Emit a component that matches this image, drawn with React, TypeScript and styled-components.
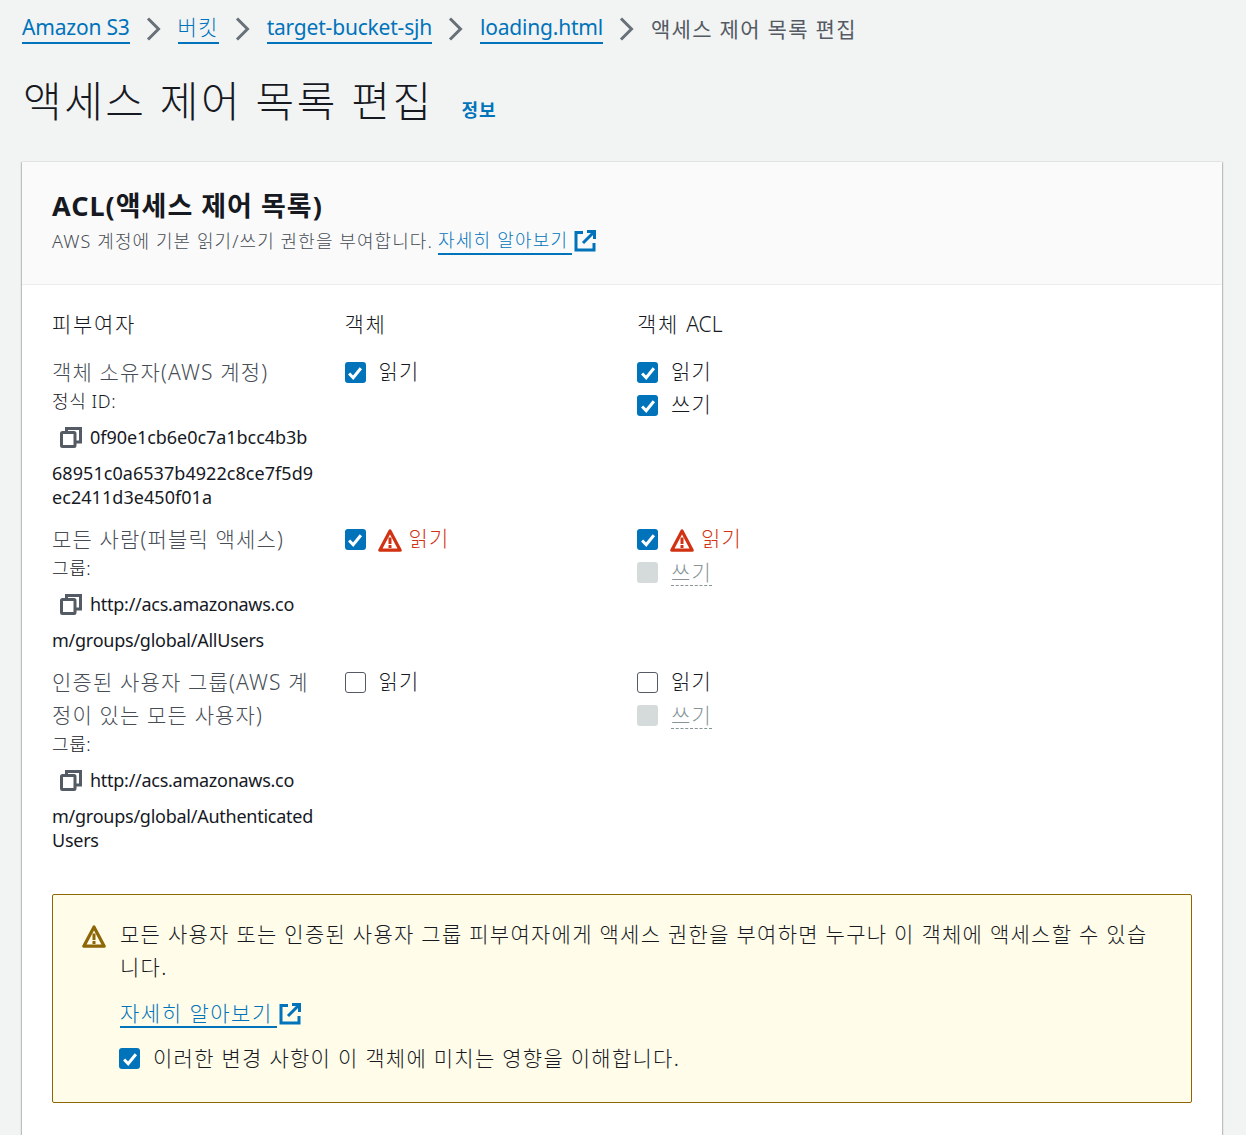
import React from "react";
import styled, { createGlobalStyle } from "styled-components";

const FONT = `"Noto Sans", "Noto Sans CJK KR", sans-serif`;

const Global = createGlobalStyle`
  html, body { margin: 0; padding: 0; background: #f2f3f3; }
  body { font-family: ${FONT}; color: #16191f; height: 1135px; overflow: hidden; }
  * { box-sizing: border-box; }
`;

const Page = styled.div`
  padding: 0 24px 0 22px;
  width: 1246px;
  height: 1135px;
  overflow: hidden;
`;
const Crumbs = styled.nav`
  display: flex;
  align-items: center;
  height: 30px;
  margin-top: 14px;
  font-size: 21px;
  line-height: 30px;
`;
const CrumbLink = styled.a<{ $ko?: boolean }>`
  color: #0073bb;
  border-bottom: 2px solid #0073bb;
  line-height: 27px;
  height: 30px;
  font-weight: ${(p) => (p.$ko ? 300 : 400)};
  letter-spacing: ${(p) => (p.$ko ? "1.2px" : "-0.2px")};
  white-space: nowrap;
`;
const CrumbCurrent = styled.span`
  color: #545b64;
  font-weight: 400;
  font-size: 21px;
  letter-spacing: 1.3px;
  white-space: nowrap;
`;
const Sep = styled.svg`
  width: 16px;
  height: 24px;
  margin: 0 16px;
  flex: none;
`;
const TitleRow = styled.div`
  display: flex;
  align-items: baseline;
  margin-top: 28px;
  height: 58px;
`;
const Title = styled.h1`
  margin: 0;
  font-size: 42px;
  line-height: 58px;
  font-weight: 300;
  letter-spacing: 2.5px;
  color: #16191f;
  padding-left: 1px;
`;
const Info = styled.a`
  color: #0073bb;
  font-size: 18px;
  font-weight: 700;
  letter-spacing: 1px;
  margin-left: 28px;
`;
const Card = styled.section`
  margin-top: 32px;
  background: #fff;
  box-shadow: 0 1px 2px rgba(0, 28, 36, 0.3), 1px 0 1px rgba(0, 28, 36, 0.15), -1px 0 1px rgba(0, 28, 36, 0.15);
  height: 1000px;
`;
const CardHead = styled.header`
  background: #fafafa;
  border-bottom: 1px solid #eaeded;
  height: 123px;
  padding: 27px 30px 0;
`;
const CardTitle = styled.h2`
  margin: 0;
  font-size: 27px;
  line-height: 34px;
  font-weight: 700;
  letter-spacing: 1px;
`;
const CardDesc = styled.p`
  margin: 2px 0 0;
  font-size: 18px;
  line-height: 32px;
  color: #474d55;
  font-weight: 300;
  letter-spacing: 1.08px;
  display: flex;
  align-items: center;
`;
const TextLink = styled.a<{ $large?: boolean }>`
  color: #0073bb;
  border-bottom: 2px solid #0073bb;
  padding-right: 4px;
  margin-left: ${(p) => (p.$large ? 0 : 5)}px;
  font-size: ${(p) => (p.$large ? 21 : 18)}px;
  letter-spacing: ${(p) => (p.$large ? 1.5 : 1.2)}px;
  line-height: 26px;
  font-weight: 300;
`;
const Body = styled.div`
  padding: 21px 30px 0;
`;
const Grid = styled.div`
  display: grid;
  grid-template-columns: 292.5px 292.5px 1fr;
`;
const HeaderCell = styled.div`
  font-size: 21px;
  line-height: 36px;
  font-weight: 300;
  letter-spacing: 1.7px;
  height: 36px;
  margin-bottom: 14px;
`;
const HeaderLatin = styled.span`
  letter-spacing: 0;
`;
const GranteeCell = styled.div`
  width: 264px;
  padding-bottom: 14px;
`;
const Name = styled.div`
  font-size: 21px;
  line-height: 33px;
  letter-spacing: 1.15px;
  color: #474d55;
  font-weight: 300;
  word-break: break-all;
`;
const Sub = styled.div`
  font-size: 18px;
  line-height: 24px;
  letter-spacing: 0.6px;
  color: #16191f;
  font-weight: 300;
`;
const CopyRow = styled.div<{ $url?: boolean }>`
  display: flex;
  align-items: center;
  gap: 8px;
  padding-left: 8px;
  height: 36px;
  margin-top: 6px;
  margin-bottom: 6px;
  font-size: 18px;
  font-weight: 400;
  letter-spacing: ${(p) => (p.$url ? "-0.27px" : "-0.05px")};
  white-space: nowrap;
`;
const Wrapped = styled.div<{ $url?: boolean }>`
  font-size: 18px;
  line-height: 24px;
  letter-spacing: ${(p) => (p.$url ? "-0.25px" : "0.05px")};
  word-break: break-all;
  font-weight: 400;
`;
const CheckCol = styled.div`
  display: flex;
  flex-direction: column;
`;
const CheckRow = styled.label`
  display: flex;
  align-items: center;
  height: 33px;
  font-size: 21px;
  font-weight: 300;
`;
const Box = styled.span<{ $state: "on" | "off" | "disabled" }>`
  width: 21px;
  height: 21px;
  flex: none;
  border-radius: 3px;
  margin-right: 13px;
  display: flex;
  align-items: center;
  justify-content: center;
  background: ${(p) => (p.$state === "on" ? "#0073bb" : p.$state === "disabled" ? "#d5dbdb" : "#fff")};
  border: ${(p) => (p.$state === "off" ? "1.5px solid #545b64" : "none")};
`;
const CheckLabel = styled.span<{ $tone?: "warn" | "disabled" }>`
  color: ${(p) => (p.$tone === "warn" ? "#d13212" : p.$tone === "disabled" ? "#879596" : "#16191f")};
  border-bottom: ${(p) => (p.$tone === "disabled" ? "1px dashed #879596" : "none")};
  line-height: ${(p) => (p.$tone === "disabled" ? "26px" : "33px")};
  margin-top: ${(p) => (p.$tone === "disabled" ? "-1px" : "-3px")};
  letter-spacing: 1.2px;
`;
const WarnIcon = styled.svg`
  margin-right: 7px;
  margin-left: -1px;
  flex: none;
`;
const Alert = styled.div`
  margin-top: 28px;
  height: 209px;
  border: 1px solid #8d6605;
  border-radius: 2px;
  background: #fffce9;
  display: flex;
  padding: 23px 30px 0;
`;
const AlertIcon = styled.div`
  flex: none;
  width: 37px;
  padding-top: 6px;
`;
const AlertBody = styled.div`
  flex: 1;
  font-size: 21px;
  line-height: 33px;
  letter-spacing: 1.27px;
  font-weight: 300;
`;
const AlertText = styled.div`
  word-break: break-all;
`;
const AlertLink = styled.div`
  display: flex;
  align-items: center;
  margin-top: 16px;
`;
const ExtIcon = styled.svg`
  margin-left: 2px;
  flex: none;
`;
const Ack = styled.label`
  display: flex;
  align-items: center;
  height: 33px;
  margin-top: 14px;
  margin-left: -1px;
`;

const Chevron = () => (
  <Sep viewBox="0 0 16 24">
    <path d="M2 1.5l10.5 10.5L2 22.5" fill="none" stroke="#687078" strokeWidth="3" />
  </Sep>
);

const Check = () => (
  <svg width="16" height="16" viewBox="0 0 15 15">
    <path d="M2 8l3.8 4L13 3" fill="none" stroke="#fff" strokeWidth="2.8" />
  </svg>
);

const Warn = ({ color, size = 24 }: { color: string; size?: number }) => (
  <WarnIcon width={size} height={size} viewBox="0 0 24 24">
    <path d="M12 3L1.8 22.2h20.4z" fill="none" stroke={color} strokeWidth="3.2" strokeLinejoin="round" />
    <rect x="10.5" y="9.5" width="3" height="6.5" fill={color} />
    <rect x="10.5" y="17" width="3" height="3" fill={color} />
  </WarnIcon>
);

const Ext = () => (
  <ExtIcon width="22" height="22" viewBox="0 0 22 22">
    <path d="M9 2.5H2v17.5h18v-7" fill="none" stroke="#0073bb" strokeWidth="3" />
    <path d="M13 1.5h7.5V9M20 2L9 13" fill="none" stroke="#0073bb" strokeWidth="3" />
  </ExtIcon>
);

const CopyIcon = () => (
  <svg width="22" height="22" viewBox="0 0 22 22" style={{ flex: "none" }}>
    <rect x="1.5" y="6.5" width="13.5" height="14" rx="1" fill="none" stroke="#545b64" strokeWidth="3" />
    <path d="M6.5 6V2.5h14v13.5H16" fill="none" stroke="#545b64" strokeWidth="3" />
  </svg>
);

type Perm = { label: string; state: "on" | "off" | "disabled"; warn?: boolean };

const PermRow = ({ label, state, warn }: Perm) => (
  <CheckRow>
    <Box $state={state}>{state === "on" && <Check />}</Box>
    {warn && <Warn color="#d13212" />}
    <CheckLabel $tone={warn ? "warn" : state === "disabled" ? "disabled" : undefined}>{label}</CheckLabel>
  </CheckRow>
);

const rows: {
  name: string;
  sub: string;
  copy: string;
  rest: string;
  url: boolean;
  object: Perm[];
  acl: Perm[];
}[] = [
  {
    name: "객체 소유자(AWS 계정)",
    sub: "정식 ID:",
    copy: "0f90e1cb6e0c7a1bcc4b3b",
    rest: "68951c0a6537b4922c8ce7f5d9ec2411d3e450f01a",
    url: false,
    object: [{ label: "읽기", state: "on" }],
    acl: [
      { label: "읽기", state: "on" },
      { label: "쓰기", state: "on" },
    ],
  },
  {
    name: "모든 사람(퍼블릭 액세스)",
    sub: "그룹:",
    copy: "http://acs.amazonaws.co",
    rest: "m/groups/global/AllUsers",
    url: true,
    object: [{ label: "읽기", state: "on", warn: true }],
    acl: [
      { label: "읽기", state: "on", warn: true },
      { label: "쓰기", state: "disabled" },
    ],
  },
  {
    name: "인증된 사용자 그룹(AWS 계정이 있는 모든 사용자)",
    sub: "그룹:",
    copy: "http://acs.amazonaws.co",
    rest: "m/groups/global/AuthenticatedUsers",
    url: true,
    object: [{ label: "읽기", state: "off" }],
    acl: [
      { label: "읽기", state: "off" },
      { label: "쓰기", state: "disabled" },
    ],
  },
];

export default function App() {
  return (
    <Page>
      <Global />
      <Crumbs>
        <CrumbLink>Amazon S3</CrumbLink>
        <Chevron />
        <CrumbLink $ko>버킷</CrumbLink>
        <Chevron />
        <CrumbLink>target-bucket-sjh</CrumbLink>
        <Chevron />
        <CrumbLink>loading.html</CrumbLink>
        <Chevron />
        <CrumbCurrent>액세스 제어 목록 편집</CrumbCurrent>
      </Crumbs>
      <TitleRow>
        <Title>액세스 제어 목록 편집</Title>
        <Info>정보</Info>
      </TitleRow>
      <Card>
        <CardHead>
          <CardTitle>ACL(액세스 제어 목록)</CardTitle>
          <CardDesc>
            AWS 계정에 기본 읽기/쓰기 권한을 부여합니다.
            <TextLink>자세히 알아보기</TextLink>
            <Ext />
          </CardDesc>
        </CardHead>
        <Body>
          <Grid>
            <HeaderCell>피부여자</HeaderCell>
            <HeaderCell>객체</HeaderCell>
            <HeaderCell>
              객체 <HeaderLatin>ACL</HeaderLatin>
            </HeaderCell>
            {rows.map((r) => (
              <React.Fragment key={r.name}>
                <GranteeCell>
                  <Name>{r.name}</Name>
                  <Sub>{r.sub}</Sub>
                  <CopyRow $url={r.url}>
                    <CopyIcon />
                    {r.copy}
                  </CopyRow>
                  <Wrapped $url={r.url}>{r.rest}</Wrapped>
                </GranteeCell>
                <CheckCol>
                  {r.object.map((p) => (
                    <PermRow key={p.label} {...p} />
                  ))}
                </CheckCol>
                <CheckCol>
                  {r.acl.map((p) => (
                    <PermRow key={p.label} {...p} />
                  ))}
                </CheckCol>
              </React.Fragment>
            ))}
          </Grid>
          <Alert>
            <AlertIcon>
              <Warn color="#8d6605" />
            </AlertIcon>
            <AlertBody>
              <AlertText>
                모든 사용자 또는 인증된 사용자 그룹 피부여자에게 액세스 권한을 부여하면 누구나 이 객체에 액세스할 수 있습니다.
              </AlertText>
              <AlertLink>
                <TextLink $large>자세히 알아보기</TextLink>
                <Ext />
              </AlertLink>
              <Ack>
                <Box $state="on">
                  <Check />
                </Box>
                이러한 변경 사항이 이 객체에 미치는 영향을 이해합니다.
              </Ack>
            </AlertBody>
          </Alert>
        </Body>
      </Card>
    </Page>
  );
}
